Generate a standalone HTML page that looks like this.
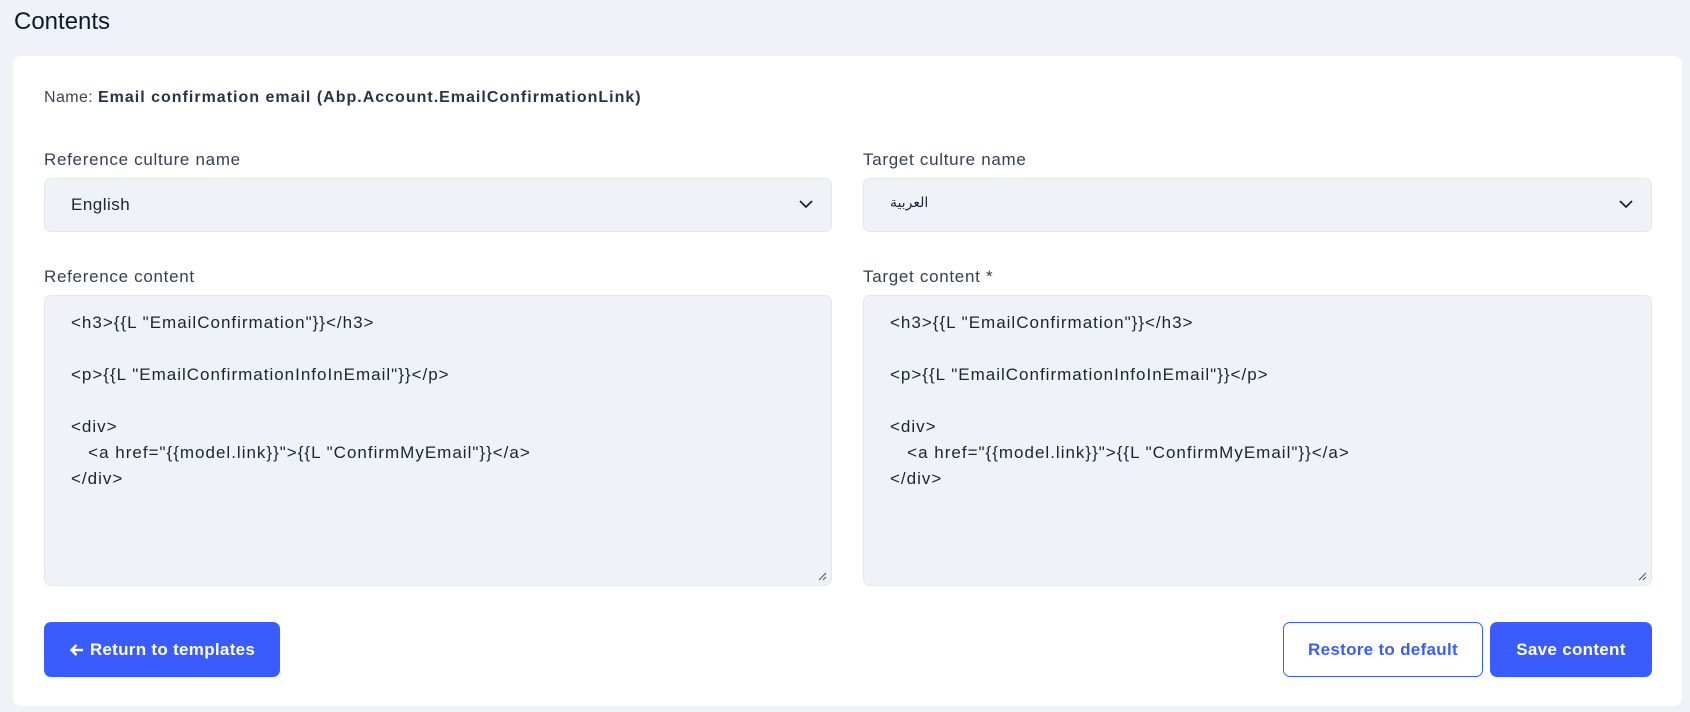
<!DOCTYPE html>
<html><head><meta charset="utf-8"><style>
*{box-sizing:border-box;margin:0;padding:0}
body{width:1690px;height:712px;background:#eff2f6;font-family:"Liberation Sans","DejaVu Sans",sans-serif;color:#1f2d3d;position:relative;overflow:hidden}
h1{position:absolute;left:14px;top:8px;font-size:24px;font-weight:400;color:#0c1a2b}
.card{position:absolute;left:13px;top:56px;width:1669px;height:650px;background:#fff;border-radius:8px}
.abs{position:absolute}
.name{left:31px;top:33px;font-size:16px;color:#3a4656;letter-spacing:0.4px}
.name b{color:#263445;letter-spacing:1px}
.lbl{font-size:17px;color:#344152;letter-spacing:0.7px}
.sel{background:#eff2f6;border:1px solid #e3e7ed;border-radius:7px;height:54px;font-size:17px;padding:16px 26px;color:#1b2433;letter-spacing:0.5px}
.sel svg{position:absolute;right:18px;top:20px}
.ta{background:#eff2f6;border:1px solid #e3e7ed;border-radius:7px;height:291px;font-size:17px;color:#1b2433;padding:14px 26px;line-height:26px;letter-spacing:1px}
.ta .rs{position:absolute;right:4px;bottom:4px}
.btn{border-radius:7px;height:55px;font-size:17px;font-weight:700;display:flex;align-items:center;justify-content:center;letter-spacing:0.3px}
</style></head><body>
<h1>Contents</h1>
<div class="card">
<div class="abs name">Name: <b>Email confirmation email (Abp.Account.EmailConfirmationLink)</b></div>
<div class="abs lbl" style="left:31px;top:94px">Reference culture name</div>
<div class="abs lbl" style="left:850px;top:94px">Target culture name</div>
<div class="abs sel" style="left:31px;top:122px;width:788px">English<svg width="14" height="10" viewBox="0 0 14 10"><path d="M1 2l6 6 6-6" fill="none" stroke="#222" stroke-width="1.8"/></svg></div>
<div class="abs sel" style="left:850px;top:122px;width:789px;font-family:'DejaVu Sans',sans-serif;font-size:14px;letter-spacing:0">العربية<svg width="14" height="10" viewBox="0 0 14 10"><path d="M1 2l6 6 6-6" fill="none" stroke="#222" stroke-width="1.8"/></svg></div>
<div class="abs lbl" style="left:31px;top:211px">Reference content</div>
<div class="abs lbl" style="left:850px;top:211px">Target content *</div>
<div class="abs ta" style="left:31px;top:239px;width:788px">&lt;h3&gt;{{L "EmailConfirmation"}}&lt;/h3&gt;<br><br>&lt;p&gt;{{L "EmailConfirmationInfoInEmail"}}&lt;/p&gt;<br><br>&lt;div&gt;<br>&nbsp;&nbsp;&nbsp;&lt;a href="{{model.link}}"&gt;{{L "ConfirmMyEmail"}}&lt;/a&gt;<br>&lt;/div&gt;<svg class="rs" width="10" height="10"><path d="M9 2L2 9M9 6L6 9" stroke="#555" stroke-width="1"/></svg></div>
<div class="abs ta" style="left:850px;top:239px;width:789px">&lt;h3&gt;{{L "EmailConfirmation"}}&lt;/h3&gt;<br><br>&lt;p&gt;{{L "EmailConfirmationInfoInEmail"}}&lt;/p&gt;<br><br>&lt;div&gt;<br>&nbsp;&nbsp;&nbsp;&lt;a href="{{model.link}}"&gt;{{L "ConfirmMyEmail"}}&lt;/a&gt;<br>&lt;/div&gt;<svg class="rs" width="10" height="10"><path d="M9 2L2 9M9 6L6 9" stroke="#555" stroke-width="1"/></svg></div>
<div class="abs btn" style="left:31px;top:566px;width:236px;background:#3a5cff;color:#fff"><svg width="15" height="14" viewBox="0 0 15 14" style="margin-right:6px"><path d="M14 7H3M7.5 2L2.5 7l5 5" fill="none" stroke="#fff" stroke-width="2.4"/></svg>Return to templates</div>
<div class="abs btn" style="left:1270px;top:566px;width:200px;border:1px solid #3a5cff;color:#3a5cff;background:#fff">Restore to default</div>
<div class="abs btn" style="left:1477px;top:566px;width:162px;background:#3a5cff;color:#fff">Save content</div>
</div>
</body></html>
